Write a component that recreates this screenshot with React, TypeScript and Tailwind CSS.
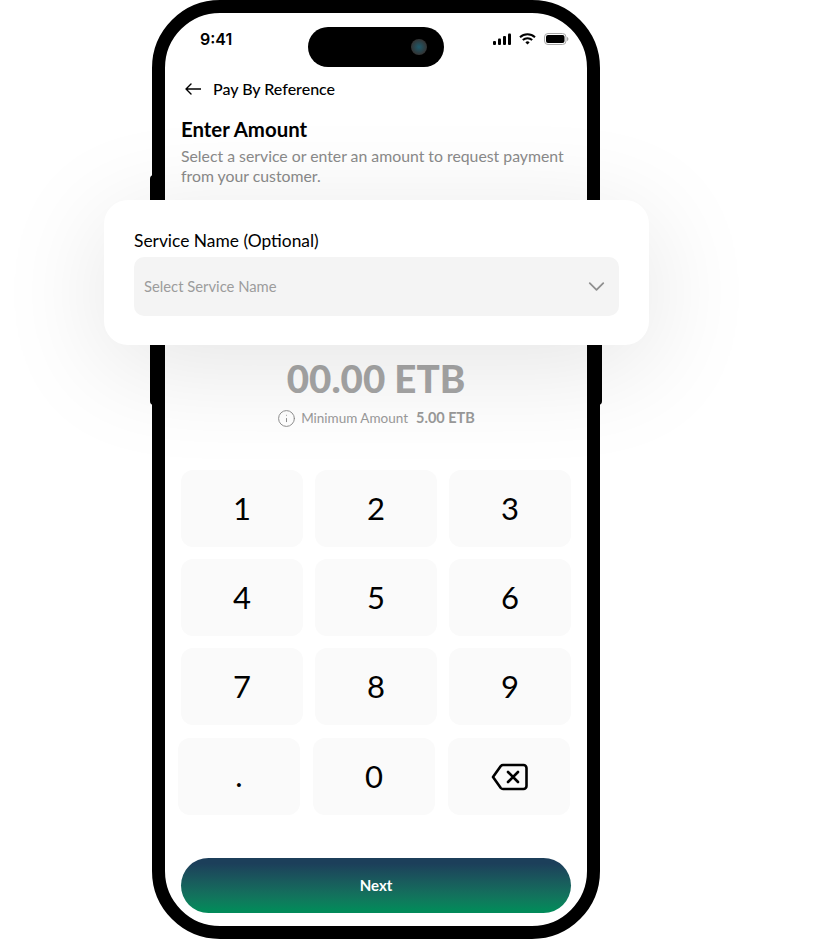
import React from "react";
import { ChevronDown, Info } from "lucide-react";

const rows = [
  ["1", "2", "3"],
  ["4", "5", "6"],
  ["7", "8", "9"],
];

function StatusIcons() {
  return (
    <div className="flex items-center gap-[8px]">
      {/* signal */}
      <svg width="18" height="12" viewBox="0 0 18 12" fill="#000">
        <rect x="0" y="8" width="3" height="4" rx="1" />
        <rect x="5" y="5.5" width="3" height="6.5" rx="1" />
        <rect x="10" y="3" width="3" height="9" rx="1" />
        <rect x="15" y="0.5" width="3" height="11.5" rx="1" />
      </svg>
      {/* wifi */}
      <svg width="17" height="12" viewBox="0 0 17 12" fill="none" stroke="#000" strokeWidth="2">
        <path d="M1 4.2a11 11 0 0 1 15 0" />
        <path d="M3.8 7a7 7 0 0 1 9.4 0" />
        <path d="M8.5 11.6 6.4 9.4a3 3 0 0 1 4.2 0z" fill="#000" stroke="none" />
      </svg>
      {/* battery */}
      <svg width="25" height="12" viewBox="0 0 25 12">
        <rect x="0.5" y="0.5" width="21.500" height="11" rx="3.5" fill="none" stroke="#a8a8a8" />
        <rect x="2" y="2" width="18.500" height="8" rx="2" fill="#000" />
        <path d="M23 4v4c.8-.3 1.400-1.100 1.400-2s-.6-1.700-1.400-2z" fill="#a8a8a8" />
      </svg>
    </div>
  );
}

function Key({ children }: { children: React.ReactNode }) {
  return (
    <div className="flex h-[77px] w-[122px] items-center justify-center rounded-xl bg-[#fafafa] text-[31px] text-black">
      {children}
    </div>
  );
}

export default function App() {
  return (
    <div className="relative h-[940px] w-[824px] overflow-hidden bg-white font-[Lato,sans-serif]">
      {/* side buttons */}
      <div className="absolute left-[150px] top-[175px] h-[230px] w-[4px] rounded-l-sm bg-black" />
      <div className="absolute left-[598px] top-[200px] h-[205px] w-[4px] rounded-r-sm bg-black" />

      {/* phone */}
      <div className="relative ml-[152px] h-[939px] w-[448px] rounded-[68px] border-[13px] border-black bg-white">
        <div className="flex h-[57px] items-center justify-between pb-[5px] pl-[35px] pr-[18px]">
          <span className="font-['Inter',sans-serif] text-[16px] font-semibold text-black">9:41</span>
          <StatusIcons />
        </div>
        {/* dynamic island */}
        <div className="absolute left-[143px] top-[14px] flex h-[40px] w-[136px] items-center justify-end rounded-full bg-black pr-[17px]">
          <div className="h-[16px] w-[16px] rounded-full bg-[radial-gradient(circle,#1d5a6c_0%,#333333_70%)]" />
        </div>

        <div className="flex h-[38px] items-center gap-[12px] pb-[1px] pl-[20px]">
          <svg width="16" height="12" viewBox="0 0 16 12" fill="none" stroke="#000" strokeWidth="1.4" strokeLinecap="round" strokeLinejoin="round">
            <path d="M1 6h15M6 1 1 6l5 5" />
          </svg>
          <span className="text-[16px] font-medium text-black">Pay By Reference</span>
        </div>

        <div className="pl-[16px] pr-[16px] pt-[9px]">
          <h1 className="text-[20.4px] font-bold leading-[24px] text-black">Enter Amount</h1>
          <p className="mt-[5px] text-[15.8px] leading-[20px] text-[#8a8a8a]">
            Select a service or enter an amount to request payment from your customer.
          </p>
        </div>

        <div className="mt-[170px] flex flex-col items-center">
          <div className="text-[38.5px] font-black leading-[44px] text-[#a6a6a6]">00.00 ETB</div>
          <div className="mt-[8px] flex h-[20px] items-center gap-[5px] text-[13.5px] text-[#9a9a9a]">
            <Info size={19} strokeWidth={1.2} className="text-[#8a8a8a]" />
            <span>Minimum Amount</span>
            <span className="ml-[3px] text-[14.5px] font-bold">5.00 ETB</span>
          </div>
        </div>

        <div className="mt-[42px] flex flex-col gap-[12px] pl-[16px]">
          {rows.map((row) => (
            <div key={row[0]} className="flex gap-[12px]">
              {row.map((k) => (
                <Key key={k}>{k}</Key>
              ))}
            </div>
          ))}
          <div className="-ml-[3px] mt-[1px] flex gap-[13px]">
            <Key>
              <span className="-mt-[2px]">.</span>
            </Key>
            <Key>0</Key>
            <Key>
              <svg width="37" height="28" viewBox="0 0 37 28" fill="none" stroke="#000" strokeWidth="2.6" strokeLinejoin="round" strokeLinecap="round">
                <path d="M12 2h20.500a3 3 0 0 1 3 3v18a3 3 0 0 1-3 3H12a3 3 0 0 1-2.200-1L2 14l7.800-11A3 3 0 0 1 12 2z" />
                <path d="m17 9 10 10M27 9 17 19" />
              </svg>
            </Key>
          </div>
        </div>

        <div className="mx-[16px] mt-[43px] flex h-[55px] w-[390px] items-center justify-center rounded-full bg-gradient-to-b from-[#1c3f5a] from-10% to-[#028a5a] to-95% text-[15px] font-bold text-white">
          Next
        </div>
      </div>

      {/* floating card */}
      <div className="absolute left-[104px] top-[200px] h-[145px] w-[545px] rounded-3xl bg-white px-[30px] pt-[31px] shadow-[0_20px_110px_rgba(0,0,0,0.11)]">
        <div className="text-[17.4px] leading-[20px] text-black">Service Name (Optional)</div>
        <div className="mt-[6px] flex h-[59px] items-center justify-between rounded-[10px] bg-[#f4f4f4] pl-[10px] pr-[9px]">
          <span className="text-[14.8px] text-[#9c9c9c]">Select Service Name</span>
          <ChevronDown size={27} strokeWidth={1.6} className="text-[#8f8f8f]" />
        </div>
      </div>
    </div>
  );
}
